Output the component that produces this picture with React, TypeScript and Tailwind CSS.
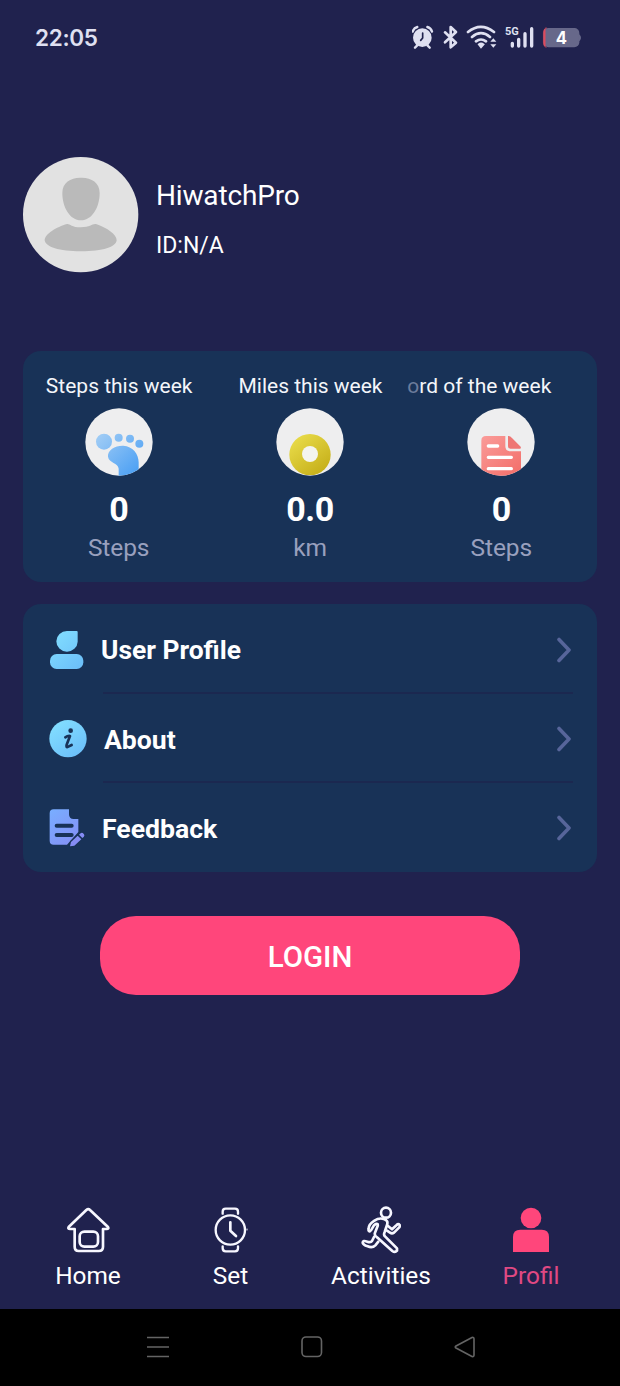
import type { ReactNode } from "react";

function StatusBar() {
  return (
    <header className="flex h-[74px] items-center justify-between pt-[1px] pl-[35px] pr-[36px]">
      <span className="font-['Inter'] text-[22.5px] leading-[30px] font-semibold tracking-[-0.3px] text-[#dfe0f1]">22:05</span>
      <svg width="172" height="30" viewBox="0 0 516 90" fill="none" stroke="#dfe0f1" strokeLinecap="round">
        <circle cx="31" cy="44" r="28" fill="#dfe0f1" stroke="none" />
        <path d="M2 26Q5 15 16 12M46 12Q57 15 60 26M15 68L9 74M47 68L53 74" strokeWidth="7" />
        <path d="M32 30V45L26 52" stroke="#20224e" strokeWidth="5" />
        <path d="M99 28L132 59L116 73V12L132 27L99 58" strokeWidth="8" strokeLinejoin="round" />
        <path d="M168 27Q206 -4 246 27M180 42Q207 19 234 42M192 55Q207 44 222 55" strokeWidth="8" />
        <path d="M200 64Q207 58 215 64L207 73Z" fill="#dfe0f1" stroke="#dfe0f1" strokeWidth="5" />
        <path d="M244 46L253 56H235ZM235 64H253L244 74Z" fill="#dfe0f1" stroke="none" />
        <text x="279" y="37" fill="#dfe0f1" stroke="none" fontFamily="Roboto" fontWeight="700" fontSize="33">5G</text>
        <path d="M301 61V69M320 49V69M339 32V69M359 17V69" strokeWidth="10" />
        <rect x="394" y="15" width="108" height="58" rx="15" fill="#67688a" stroke="none" />
        <path d="M500 32Q514 44 500 56Z" fill="#67688a" stroke="none" />
        <path d="M404 15Q394 16 394 29V59Q394 72 404 73H400V15Z" fill="#de4b5e" stroke="#de4b5e" strokeWidth="1" />
        <text x="448" y="62" textAnchor="middle" fill="#fff" stroke="none" fontFamily="Inter" fontWeight="700" fontSize="50">4</text>
      </svg>
    </header>
  );
}

function Avatar() {
  return (
    <svg width="116" height="116" viewBox="0 0 348 348">
      <circle cx="173" cy="173" r="173" fill="#e2e2e2" />
      <path d="M174 62C204 61 230 76 230 108C230 151 207 190 174 190C141 190 118 151 118 108C118 76 144 61 174 62Z" fill="#bababa" />
      <path d="M132 201C140 199 144 211 174 211C203 211 209 198 221 202C252 213 281 232 281 250C279 270 240 283 174 283C108 283 68 270 65 250C65 231 101 210 132 201Z" fill="#bababa" />
    </svg>
  );
}

function FootIcon() {
  return (
    <svg width="68" height="68" viewBox="0 0 204 204">
      <defs>
        <clipPath id="foot-clip"><circle cx="102" cy="102" r="101" /></clipPath>
        <linearGradient id="foot-blue" x1="30" y1="70" x2="155" y2="200" gradientUnits="userSpaceOnUse">
          <stop stopColor="#a8d0f5" /><stop offset="1" stopColor="#4a9ff4" />
        </linearGradient>
      </defs>
      <circle cx="102" cy="102" r="101" fill="#eeeeef" />
      <g clipPath="url(#foot-clip)" fill="url(#foot-blue)">
        <circle cx="57" cy="101" r="24" /><circle cx="101" cy="89" r="12" />
        <circle cx="135" cy="92" r="12" /><circle cx="163" cy="107" r="12" />
        <path d="M69 146C67 126 91 112 115 113C143 115 161 137 161 163V204H101V182C100 163 72 166 69 146Z" />
      </g>
    </svg>
  );
}

function RingIcon() {
  return (
    <svg width="68" height="68" viewBox="0 0 204 204">
      <defs>
        <clipPath id="ring-clip"><circle cx="102" cy="102" r="101" /></clipPath>
        <linearGradient id="ring-gold" x1="55" y1="85" x2="145" y2="200" gradientUnits="userSpaceOnUse">
          <stop stopColor="#e9dc4a" /><stop offset="1" stopColor="#c4ad17" />
        </linearGradient>
      </defs>
      <circle cx="102" cy="102" r="101" fill="#eeeeef" />
      <g clipPath="url(#ring-clip)">
        <circle cx="102" cy="140" r="62" fill="url(#ring-gold)" />
        <circle cx="102" cy="138" r="24" fill="#f4f4ef" />
      </g>
    </svg>
  );
}

function RecordIcon() {
  return (
    <svg width="68" height="68" viewBox="0 0 204 204">
      <defs>
        <clipPath id="record-clip"><circle cx="102" cy="102" r="101" /></clipPath>
        <linearGradient id="record-red" x1="40" y1="85" x2="150" y2="200" gradientUnits="userSpaceOnUse">
          <stop stopColor="#fa9c9a" /><stop offset="1" stopColor="#f3706b" />
        </linearGradient>
      </defs>
      <circle cx="102" cy="102" r="101" fill="#eeeeef" />
      <g clipPath="url(#record-clip)">
        <path d="M57 84H115V115Q115 130 130 130H162V210H43V98Q43 84 57 84Z" fill="url(#record-red)" />
        <path d="M125 84Q130 84 135 90L161 116Q164 122 156 122H130Q123 122 123 115V84Z" fill="#ee7775" />
        <path d="M64 114H92M64 148H133M64 182H133" stroke="#fff" strokeWidth="10" strokeLinecap="round" />
      </g>
    </svg>
  );
}

function Stat({ label, icon, value, unit }: { label: ReactNode; icon: ReactNode; value: string; unit: string }) {
  return (
    <div className="flex flex-1 flex-col items-center">
      <div className="mt-[21px] ml-[1px] h-[28px] text-[21px] leading-[29px] whitespace-nowrap text-[#f4f6fa]">{label}</div>
      <div className="mt-[8px] h-[68px]">{icon}</div>
      <div className="mt-[13px] text-[34px] leading-[40px] font-bold tracking-[-0.5px] text-white">{value}</div>
      <div className="mt-[4px] text-[24.5px] leading-[30px] tracking-[-0.1px] text-[#99a0be]">{unit}</div>
    </div>
  );
}

function UserIcon() {
  return (
    <svg width="40" height="42" viewBox="0 0 120 126">
      <defs>
        <linearGradient id="user-cyan" x1="10" y1="10" x2="110" y2="120" gradientUnits="userSpaceOnUse">
          <stop stopColor="#83dfff" /><stop offset="1" stopColor="#6abdf9" />
        </linearGradient>
      </defs>
      <g fill="url(#user-cyan)">
        <path d="M60 6H89Q92 6 92 9V38A32 31 0 1 1 60 6Z" />
        <rect x="9" y="75" width="100" height="45" rx="20" />
      </g>
    </svg>
  );
}

function InfoIcon() {
  return (
    <svg width="40" height="42" viewBox="0 0 120 126">
      <defs>
        <linearGradient id="info-cyan" x1="20" y1="10" x2="100" y2="120" gradientUnits="userSpaceOnUse">
          <stop stopColor="#83dfff" /><stop offset="1" stopColor="#6abdf9" />
        </linearGradient>
      </defs>
      <circle cx="63" cy="62" r="56" fill="url(#info-cyan)" />
      <circle cx="71" cy="38" r="7" fill="#183257" />
      <path d="M55 58Q62 53 69 54L59 80Q56 90 64 86L74 81" fill="none" stroke="#183257" strokeWidth="8" strokeLinecap="round" strokeLinejoin="round" />
    </svg>
  );
}

function FeedbackIcon() {
  return (
    <svg width="40" height="42" viewBox="0 0 120 126">
      <defs>
        <linearGradient id="feedback-blue" x1="10" y1="10" x2="100" y2="120" gradientUnits="userSpaceOnUse">
          <stop stopColor="#79adff" /><stop offset="1" stopColor="#858cf4" />
        </linearGradient>
      </defs>
      <path d="M20 7H66V22Q66 36 80 36H94V75L60 113H20Q8 113 8 101V19Q8 7 20 7Z" fill="url(#feedback-blue)" />
      <path d="M29 56H74M29 84H74" stroke="#183257" strokeWidth="12" strokeLinecap="round" />
      <path d="M66 119L69 103L98 77Q104 72 111 80Q117 87 110 92L82 119Q77 122 66 121Z" fill="#183257" />
      <path d="M69 118L72 105L92 86L103 97L82 116ZM96 83L101 79Q105 75 111 82Q114 86 110 90L106 93Z" fill="#858cf4" />
    </svg>
  );
}

function MenuRow({ icon, children, last = false }: { icon: ReactNode; children: ReactNode; last?: boolean }) {
  return (
    <div className="flex flex-1 items-stretch pr-[24px] pl-[24px]">
      <div className="flex w-[56px] items-center">{icon}</div>
      <div className={last ? "flex flex-1 items-center justify-between pb-px" : "flex flex-1 items-center justify-between border-b-2 border-[#1b2850]"}>
        {children}
        <svg width="18" height="28" viewBox="0 0 18 28" fill="none">
          <path d="M4 4.5L14 15L4 25.5" stroke="#57659a" strokeWidth="3.6" strokeLinecap="round" strokeLinejoin="round" />
        </svg>
      </div>
    </div>
  );
}

function HomeIcon() {
  return (
    <svg width="44" height="46" viewBox="0 0 132 138" fill="none" stroke="#f7f7ff" strokeWidth="8" strokeLinejoin="round">
      <path d="M8 60L61 9Q67 4 72 9L126 60Q129 66 122 66H111V119Q111 132 98 132H38Q26 132 26 119V66H12Q5 66 8 60Z" />
      <rect x="41" y="74" width="55" height="45" rx="14" />
    </svg>
  );
}

function WatchIcon() {
  return (
    <svg width="36" height="46" viewBox="0 0 108 138" fill="none" stroke="#f7f7ff" strokeWidth="7" strokeLinecap="round" strokeLinejoin="round">
      <circle cx="52" cy="69" r="44" />
      <path d="M29 20V14Q29 5 38 5H66Q75 5 75 14V20M29 118V124Q29 133 38 133H66Q75 133 75 124V118" />
      <path d="M52 46V71L69 87" strokeWidth="8" />
      <path d="M102 66V69" strokeWidth="3" />
    </svg>
  );
}

function RunIcon() {
  return (
    <svg width="40" height="48" viewBox="0 0 120 144" fill="none" stroke="#f7f7ff" strokeWidth="8" strokeLinecap="round" strokeLinejoin="round">
      <circle cx="75" cy="20" r="15" />
      <path d="M68 39C50 33 24 50 23 67Q21 77 27 76C33 74 34 59 44 54Q52 51 50 60L42 80Q39 88 48 94L94 135Q102 141 108 134V127L72 91Q67 87 71 78L78 57Q83 43 68 39Z" />
      <path d="M81 60L93 70L107 57Q112 52 116 57Q118 60 114 65L99 80Q93 84 87 80L78 74" />
      <path d="M39 93L33 105Q29 111 19 107Q5 102 5 110Q6 116 20 121Q34 127 43 118L52 107" />
    </svg>
  );
}

function ProfileIcon() {
  return (
    <svg width="38" height="46" viewBox="0 0 114 138" fill="#ff467b">
      <circle cx="57" cy="33" r="31" />
      <path d="M25 68H89Q111 68 111 90V135H3V90Q3 68 25 68Z" />
    </svg>
  );
}

function NavItem({ icon, children }: { icon: ReactNode; children: ReactNode }) {
  return (
    <div className="flex flex-col items-center">
      <div className="flex h-[48px] items-center">{icon}</div>
      <div className="mt-[7px] text-[24.4px] leading-[30px]">{children}</div>
    </div>
  );
}

export default function App() {
  return (
    <div className="flex h-[1386px] w-[620px] flex-col overflow-hidden bg-[#20224e] font-['Roboto',sans-serif] text-white">
      <StatusBar />
      <section className="mt-[83px] flex h-[116px] gap-[17px] pl-[23px]">
        <Avatar />
        <div className="flex flex-col">
          <h1 className="mt-[21px] text-[28px] leading-[36px] font-normal tracking-[-0.15px]">HiwatchPro</h1>
          <p className="mt-[17px] text-[23px] leading-[30px]">ID:N/A</p>
        </div>
      </section>
      <section className="mx-[23px] mt-[78px] flex h-[231px] rounded-[18px] bg-[#183257]">
        <Stat label="Steps this week" icon={<FootIcon />} value="0" unit="Steps" />
        <Stat label="Miles this week" icon={<RingIcon />} value="0.0" unit="km" />
        <Stat label={<div className="mr-[45px]"><span className="text-[#6c7c9c]">o</span>rd of the week</div>} icon={<RecordIcon />} value="0" unit="Steps" />
      </section>
      <section className="mx-[23px] mt-[22px] flex h-[268px] flex-col rounded-[18px] bg-[#183257] pt-px">
        <MenuRow icon={<UserIcon />}><span className="mt-[5px] ml-[-2px] text-[26.4px] font-bold">User Profile</span></MenuRow>
        <MenuRow icon={<InfoIcon />}><span className="mt-[5px] ml-[1px] text-[26.6px] font-bold">About</span></MenuRow>
        <MenuRow icon={<FeedbackIcon />} last><span className="mt-[4px] ml-[-1px] text-[26.6px] font-bold">Feedback</span></MenuRow>
      </section>
      <button className="mx-[100px] mt-[44px] h-[79px] rounded-[36px] bg-[#ff467b] pt-[3px] text-[29.5px] font-medium">LOGIN</button>
      <nav className="mt-[211px] grid h-[103px] grid-cols-[142px_143px_158px_142px] pl-[17px]">
        <NavItem icon={<HomeIcon />}>Home</NavItem>
        <NavItem icon={<WatchIcon />}>Set</NavItem>
        <NavItem icon={<RunIcon />}>Activities</NavItem>
        <NavItem icon={<ProfileIcon />}><span className="text-[#e04983]">Profil</span></NavItem>
      </nav>
      <footer className="flex flex-1 items-center justify-between bg-black pr-[143px] pb-px pl-[146px]">
        <svg width="24" height="24" viewBox="0 0 24 24" stroke="#646464" strokeWidth="1.6"><path d="M1 2.5H23M1 12H23M1 21.5H23" /></svg>
        <svg width="24" height="24" viewBox="0 0 24 24" fill="none" stroke="#646464" strokeWidth="1.6"><rect x="2" y="2" width="19.5" height="19.5" rx="4" /></svg>
        <svg width="24" height="24" viewBox="0 0 24 24" fill="none" stroke="#646464" strokeWidth="1.6" strokeLinejoin="round"><path d="M3 11L19 2.5Q21 2 21 4V20Q21 22 19 21.5L3 13Q1.5 12 3 11Z" /></svg>
      </footer>
    </div>
  );
}
